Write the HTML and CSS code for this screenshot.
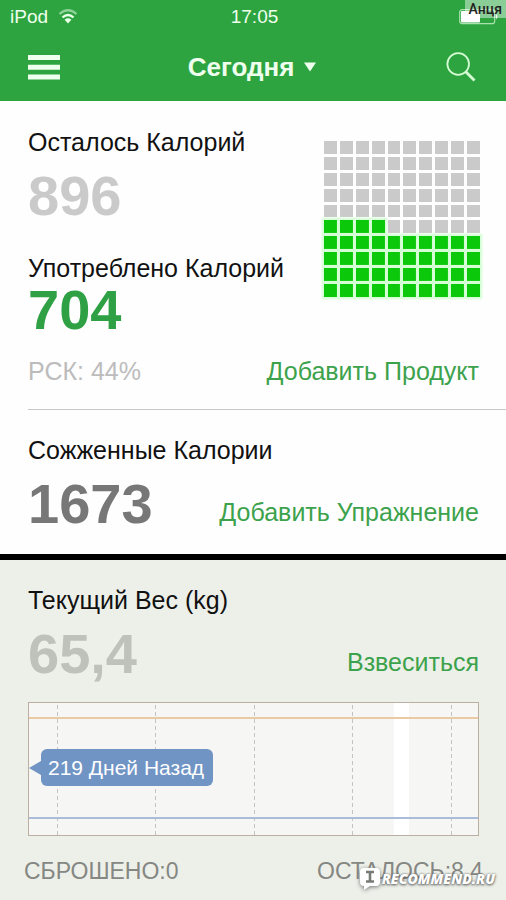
FILE: index.html
```html
<!DOCTYPE html>
<html lang="ru">
<head>
<meta charset="utf-8">
<meta name="viewport" content="width=device-width, initial-scale=1">
<title>Сегодня</title>
<link rel="stylesheet" href="styles.css">
</head>
<body>
<header class="header">
  <div class="status">
    <div class="carrier">iPod
      <svg class="wifi" viewBox="0 0 20 15" aria-hidden="true">
        <path d="M1.5 5Q10 -2.5 18.5 5" fill="none" stroke="#8fd29a" stroke-width="2.2"/>
        <path d="M4.5 8.3Q10 3.6 15.5 8.3" fill="none" stroke="#e9ffe9" stroke-width="2.4"/>
        <path d="M6.6 10.7Q10 8 13.4 10.7L10 14.4Z" fill="#e9ffe9"/>
      </svg>
    </div>
    <time>17:05</time>
    <svg class="battery" viewBox="0 0 40 16" aria-hidden="true">
      <rect x=".7" y=".7" width="35" height="14" rx="2.5" fill="none" stroke="#a9e2ae" stroke-width="1.2"/>
      <rect x="2" y="2" width="19" height="11.5" rx="1" fill="#fff"/>
      <path d="M37 5Q40 7.5 37 10.500Z" fill="#dff5df"/>
    </svg>
  </div>
  <span class="user-tag">Анця</span>
  <nav class="navbar">
    <button class="icon-button" type="button" aria-label="Меню">
      <svg class="menu-icon" viewBox="0 0 32 25"><path d="M0 2.600H32M0 12.300H32M0 22H32" stroke="#efffed" stroke-width="5"/></svg>
    </button>
    <button class="day" type="button">Сегодня
      <svg class="caret" viewBox="0 0 12 10"><path d="M0 .5H12L6 9.500Z" fill="#efffed"/></svg>
    </button>
    <button class="icon-button" type="button" aria-label="Поиск">
      <svg class="search-icon" viewBox="0 0 30 30"><circle cx="12.200" cy="12" r="10.800" fill="none" stroke="#d5fbd2" stroke-width="1.800"/><path d="M19.500 19.500L28.500 28.500" stroke="#d5fbd2" stroke-width="2.800"/></svg>
    </button>
  </nav>
</header>
<main>
  <section class="food">
    <div class="food-top">
      <div>
        <h2 class="label">Осталось Калорий</h2>
        <p class="value value-left">896</p>
        <h2 class="label">Употреблено Калорий</h2>
        <p class="value value-eaten">704</p>
      </div>
      <div class="cells" id="cells" role="img" aria-label="44%"></div>
    </div>
    <div class="row">
      <span class="muted">РСК: 44%</span>
      <a class="action" href="#food">Добавить Продукт</a>
    </div>
  </section>
  <section class="burned">
    <h2 class="label">Сожженные Калории</h2>
    <div class="row value-row">
      <p class="value value-burned">1673</p>
      <a class="action" href="#exercise">Добавить Упражнение</a>
    </div>
  </section>
  <section class="weight">
    <h2 class="label">Текущий Вес (kg)</h2>
    <div class="row value-row">
      <p class="value value-weight">65,4</p>
      <a class="action" href="#weigh">Взвеситься</a>
    </div>
    <div class="chart">
      <svg class="plot" viewBox="0 0 449 132" preserveAspectRatio="none" aria-hidden="true">
        <rect width="449" height="132" fill="#f6f6f4"/>
        <rect x="365" width="15" height="132" fill="#fff"/>
        <path d="M28.500 2V132M126.500 2V132M225.500 2V132M323.500 2V132M422.500 2V132" stroke="#c3c4c4" stroke-dasharray="4 3"/>
        <path d="M0 15H449" stroke="#e9caa5" stroke-width="2"/>
        <path d="M0 115H449" stroke="#a9bddb" stroke-width="2"/>
      </svg>
      <span class="tip">219 Дней Назад</span>
    </div>
    <div class="totals">
      <span>СБРОШЕНО:0</span>
      <span>ОСТАЛОСЬ:8.4</span>
    </div>
    <div class="watermark">
      <svg class="bubble" viewBox="0 0 22 24" aria-hidden="true">
        <path d="M5 1H17Q21 1 21 5V15Q21 19 17 19H11L5 23V19Q1 19 1 15V5Q1 1 5 1Z" fill="#fff"/>
        <path d="M7 5H15M7 14.500H15M11 5V14" stroke="#777b76" stroke-width="2.600" fill="none"/>
      </svg>
      <span>RECOMMEND.RU</span>
    </div>
  </section>
</main>
<script src="cells.js"></script>
</body>
</html>
```
FILE: cells.js
```js
// Ten by ten gauge, filled from the bottom row up, left to right.
const percent = 44;
const cells = document.getElementById("cells");
for (let i = 0; i < 100; i++) {
  const row = 9 - Math.floor(i / 10);
  const cell = document.createElement("i");
  if (row * 10 + (i % 10) < percent) cell.className = "on";
  cells.append(cell);
}
```
FILE: styles.css
```css
* { box-sizing: border-box; }
body {
  margin: 0;
  min-height: 100vh;
  display: flex;
  flex-direction: column;
  background: #fefefe;
  color: #111;
  font-family: "Liberation Sans", Arial, sans-serif;
  font-size: 25px;
  line-height: 28px;
}
main { flex: 1; display: flex; flex-direction: column; }
h2, p { margin: 0; }
h2 { font-size: 25px; font-weight: 400; }
svg { display: block; flex: none; }
button { border: 0; padding: 0; background: none; color: inherit; font: inherit; cursor: pointer; }
a { text-decoration: none; }

.header { position: relative; background: #2da440; color: #efffed; }
.status {
  display: grid;
  grid-template-columns: 1fr auto 1fr;
  align-items: center;
  height: 33px;
  padding: 0 7px 0 10px;
  font-size: 19px;
}
.carrier { display: flex; align-items: center; gap: 10px; }
.wifi { width: 20px; height: 15px; }
.battery { width: 40px; height: 16px; justify-self: end; }
.user-tag {
  position: absolute;
  top: 0;
  right: 0;
  padding: 0 4px;
  background: rgba(255, 255, 255, 0.45);
  color: #222;
  font: 500 14px/18px Roboto, sans-serif;
}
.navbar {
  display: grid;
  grid-template-columns: 1fr auto 1fr;
  align-items: center;
  height: 68px;
  padding: 0 30px 0 28px;
}
.icon-button { justify-self: start; }
.icon-button:last-child { justify-self: end; }
.menu-icon { width: 32px; height: 25px; }
.search-icon { width: 30px; height: 30px; }
.day { display: flex; align-items: center; gap: 10px; font-size: 26px; font-weight: 700; }
.caret { width: 12px; height: 10px; }

.food { margin-left: 28px; padding: 27px 27px 24px 0; border-bottom: 1px solid #c9c6c3; }
.food-top { display: flex; justify-content: space-between; margin-bottom: 19px; }
.cells {
  display: grid;
  grid-template-columns: repeat(10, 1fr);
  gap: 3px;
  flex: none;
  width: 156px;
  height: 156px;
  margin: 13px -1px 0 0;
}
.cells i { background: #cacaca; }
.cells .on { background: #0bc80b; box-shadow: 0 0 2px 2px #d2ffd2; }
.row { display: flex; justify-content: space-between; align-items: center; }
.value { font-size: 56px; line-height: 56px; font-weight: 700; }
.value-left { margin: 12px 0 30px; color: #cacaca; }
.value-eaten { color: #2fa044; }
.value-burned { color: #777; }
.value-weight { color: #bfc1bb; }
.muted { color: #bcbcbc; }
.action { color: #3ca24c; }
.value-row { margin-top: 12px; align-items: flex-end; }
.value-row .action { padding-bottom: 6px; }

.burned { padding: 26px 27px 22px 28px; }
.weight {
  position: relative;
  flex: 1;
  padding: 26px 27px 14px 28px;
  border-top: 6px solid #000;
  background: #edf0e9;
}
.chart { position: relative; margin-top: 20px; border: 1px solid #bdaea2; }
.plot { width: 100%; height: 132px; }
.tip {
  position: absolute;
  top: 46px;
  left: 12px;
  padding: 0 9px 0 7px;
  border-radius: 6px;
  background: #7094c4;
  color: #fff;
  font-size: 21px;
  line-height: 37px;
}
.tip::before {
  content: "";
  position: absolute;
  top: 12px;
  left: -12px;
  border: 7px solid transparent;
  border-right: 12px solid #7094c4;
  border-left: 0;
}
.totals {
  display: flex;
  justify-content: space-between;
  margin: 21px -4px 0;
  color: #858783;
  font-size: 23px;
}
.watermark {
  position: absolute;
  right: 11px;
  bottom: 9px;
  display: flex;
  align-items: center;
  gap: 1px;
  color: #fff;
  font: italic 800 14px/24px "Open Sans", sans-serif;
  text-shadow: 0 1px 3px #555, 0 0 2px #777;
}
.bubble { width: 22px; height: 24px; filter: drop-shadow(0 1px 2px #777); }
```
